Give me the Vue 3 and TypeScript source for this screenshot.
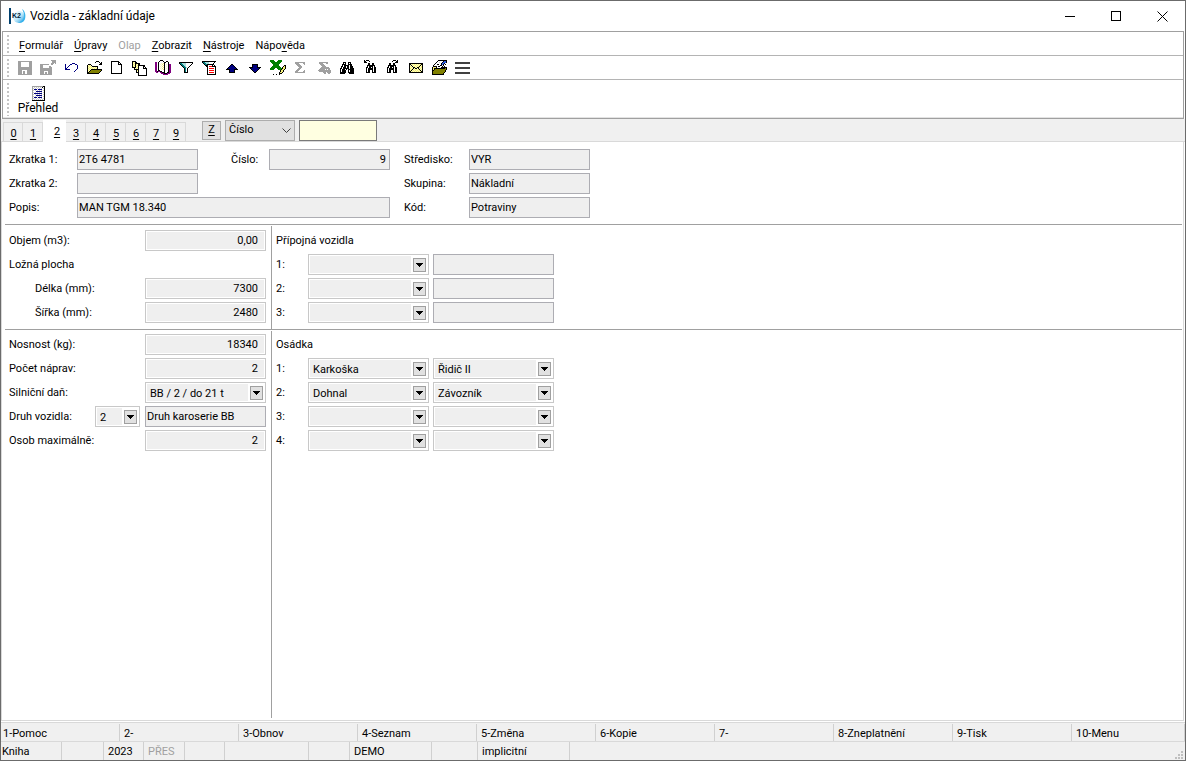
<script setup lang="ts">
import { ref } from 'vue'

interface Pixel { x: number; y: number; w: number; fill: string }
interface Tool { name: string; disabled?: boolean; rows: string[] }

const palette: Record<string, string> = {
  k: '#000000', g: '#a0a0a0', w: '#ffffff', n: '#000080', y: '#f4ee7a', Y: '#ffffc0', o: '#808000',
  t: '#008080', a: '#a8dcdc', p: '#800080', r: '#ff0000', G: '#008000', c: '#c8c8c8', d: '#404040', b: '#3060e0',
}

/* Turns rows of palette letters into horizontal runs of one colour. */
function runs(rows: string[]): Pixel[] {
  const out: Pixel[] = []
  rows.forEach((row, y) => {
    let x = 0
    while (x < row.length) {
      const ch = row[x]
      let end = x + 1
      while (end < row.length && row[end] === ch) end++
      if (palette[ch]) out.push({ x, y, w: end - x, fill: palette[ch] })
      x = end
    }
  })
  return out
}

const tools: Tool[] = [
  { name: 'Uložit', disabled: true, rows: [
    '', '', ' gggggggggggggg', ' gggwwwwwwwwggg', ' gggwwwwwwwwggg', ' gggwwwwwwwwggg', ' gggwwwwwwwwggg', ' gggwwwwwwwwggg',
    ' gggggggggggggg', ' gggggggggggggg', ' gggggggggggggg', ' ggggwwwwwggggg', ' ggggwggwwggggg', ' ggggwggwwggggg', ' ggggwggwwggggg', ' gggggggggggggg'] },
  { name: 'Uložit a zavřít', disabled: true, rows: [
    '', '           ggggg', '            gggg', '            gggg', '           ggg g', 'ggggggggg  gg', 'gggwwwwww', 'gggwwwwwwgg', 'gggwwwwwwggg',
    'gggggggggggg', 'gggggggggggg', 'gggggggggggg', 'ggggwwwwgggg', 'ggggwggwgggg', 'ggggwggwgggg', 'gggggggggggg'] },
  { name: 'Zpět', rows: [
    '', '', '', '', '         nnn', '  n    nn   nn', '  n   n       n', '  n  n        n', '  n n         n', '  nn          n', '  nnnnn      n', '            n', '           n'] },
  { name: 'Otevřít', rows: [
    '', '', '          kkk', '         k   k k', '              kk', '  kkk        kkk', ' kYyYk', ' kyYyYkkkkkk', ' kYyYyYyYyYk', ' kyYyYyYyYyk',
    ' kYyYkkkkkkkkkkk', ' kyYkooooooooook', ' kYkooooooooook', ' kkooooooooook', ' kkkkkkkkkkkk'] },
  { name: 'Nový', rows: [
    '', '', '  kkkkkkkk', '  kwwwwwwkk', '  kwwwwwwkwk', '  kwwwwwwkkkk', '  kwwwwwwwwwk', '  kwwwwwwwwwk', '  kwwwwwwwwwk', '  kwwwwwwwwwk',
    '  kwwwwwwwwwk', '  kwwwwwwwwwk', '  kwwwwwwwwwk', '  kwwwwwwwwwk', '  kkkkkkkkkkk'] },
  { name: 'Kopie', rows: [
    '', '', 'kkkk', 'kyYkk', 'kYykkkkk', 'kyYkyYkk', 'kYykYykkkkkkk', 'kyYkyYkwwwwkk', 'kkkkYykwwwwkwk', '  kYyYkwwwwkkkk', '  kkkkkwwwwwwwk', '    kykwwwwwwwk',
    '    kYkwwwwwwwk', '    kkkwwwwwwwk', '      kwwwwwwwk', '      kwwwwwwwk', '      kkkkkkkkk'] },
  { name: 'Kniha', rows: [
    '', '     kkk', '    kwwwk  kk', 'pp kwwwwwkkwwk', 'pp kwwYwykwwwk', 'pp kwYwywkwYwkpp', 'pp kwwYwykwwwkpp', 'pp kwYwywkwYwkpp', 'pp kwwYwykwwwkpp', 'pp kwYwywkwYwkpp',
    'pp kwwYwykwwwkpp', 'pp kkwwwwkwwwkpp', 'ppkppkkwwkwwwkpp', ' pp  ppkkkwwkkpp', '      pppkkkppp', '        ppppp'] },
  { name: 'Filtr', rows: [
    '', '', '', ' kkkkkkkkkkkkkk', ' kttaaaawwwwwwk', '  kttaaawwwwwk', '   kttaawwwwk', '    kttawwwk', '     kttawk', '      ktwk', '      ktwk', '      ktwk', '      ktwk', '      kkkk'] },
  { name: 'Filtr záznamů', rows: [
    '', '', ' kkkkkkkkkkkkkk', ' kttaaaawwwwwk', '  kttaaawwwwk', '   kttkkkkkkk', '    kkkwwwwkwk', '     kkwrrrkkkk', '      kwwwwwwwk', '      kwrrrrrwk', '      kwwwwwwwk', '      kwrrrrrwk',
    '      kwwwwwwwk', '      kwrrrrrwk', '      kwwwwwwwk', '      kkkkkkkkk'] },
  { name: 'Nahoru', rows: [
    '', '', '', '', '', '       kk', '      knnk', '     knnnnk', '    knnnnnnk', '   knnnnnnnnk', '  kkkknnnnkkkk', '     knnnnk', '     knnnnk', '     kkkkkk'] },
  { name: 'Dolů', rows: [
    '', '', '', '', '', '     kkkkkk', '     knnnnk', '     knnnnk', '  kkkknnnnkkkk', '   knnnnnnnnk', '    knnnnnnk', '     knnnnk', '      knnk', '       kk'] },
  { name: 'Export do Excelu', rows: [
    '', 'GGGG    GGGG', 'GGGGG  GGGGG', ' GGGGGGGGGG', '  GGGGGGGG', '   GGGGGG', '   GGGGGG     kk', '  GGGGGGGG   kyk', ' GGGGGGGGGG kyyk', 'GGGGG  GGGGGkyyk', 'GGGG    GGGkyyk', '          kyyk', '          kyyk', '         kyyk', '         kkk', '   k  k  k'] },
  { name: 'Součet', disabled: true, rows: [
    '', '', '', '  gggggggggg', '  gggg    gg', '   gggg    g', '    gggg', '     gggg', '      ggg', '     ggg', '    ggg', '   ggg     g', '  ggg     gg', '  gggggggggg'] },
  { name: 'Součet výběru', disabled: true, rows: [
    '', '', '', '   ggggggggg', '   gggg   gg', '    gggg', '     gggg', '      gggg', '     gggggggg', '    gggggggggg', '   ggggggwgwgg', '  ggggggggggggg', '   gggggggggggg', '       gggwgggg', '        gg  gg'] },
  { name: 'Hledat', rows: [
    '', '', '', '    kkk  kkk', '    kwk  kwk', '   kkkk  kkkk', '   kwkkkkkwkk', '  kkwkkwkkwkkk', '  kwkkkwkkwkkk', ' kkwkkkkkkwkkkk', ' kwkkkwkwkkkkkk', ' kwkkkk  kwkkkk', ' kwkkkk  kwkkkk', ' kkkkkk  kkkkkk', ' kkkkk    kkkkk'] },
  { name: 'Hledat předchozí', rows: [
    '', '  k kkk', '  kk   k', '  kkk', '      kk  kk', '      kk  kk', '     kkkkkkkk', '     kwkkkkwk', '    kkwkkwkwkk', '    kwkkkkkwkk', '    kwkkkkkwkk', '    kwkk  kwkk', '    kwkk  kwkk', '    kkkk  kkkk'] },
  { name: 'Hledat další', rows: [
    '', '        kkk k', '       k   kk', '          kkk', '    kk  kk', '    kk  kk', '   kkkkkkkk', '   kwkkkkwk', '  kkwkkwkwkk', '  kwkkkkkwkk', '  kwkkkkkwkk', '  kwkk  kwkk', '  kwkk  kwkk', '  kkkk  kkkk'] },
  { name: 'Pošta', rows: [
    '', '', '', '', ' kkkkkkkkkkkkkk', ' kkYyYyYyYyYykk', ' kYkYyYyYyYykYk', ' kyYkYyYyYykYyk', ' kYyYkkyYkkyYyk', ' kyYykYkkYkYyYk', ' kYykYyYyYykYyk', ' kykYyYyYyYykYk', ' kkYyYyYyYyYykk', ' kkkkkkkkkkkkkk'] },
  { name: 'Upravit', rows: [
    '', '       kkkkkkkkk', '      kwwwwwkbbk', '     kwwcwwkbbbk', '    kwwwwwkbbk', '   kwwkkwwkbk k', '  kwwwwwwkkwk', '  kkkkwkkwwk k', ' kyyykwwwwkkkkkk', ' kykkkkkkkkkkkok', ' kykoooooooooook', ' kkoooooooooook', ' kooooooooooook', ' koooooooooook', ' kooooooooook', ' kkkkkkkkkkkk'] },
  { name: 'Nabídka', rows: [
    '', '', '', ' ddddddddddddddd', ' ddddddddddddddd', '', '', '', ' ddddddddddddddd', ' ddddddddddddddd', '', '', '', ' ddddddddddddddd', ' ddddddddddddddd'] },
]

const overviewIcon = [
  'gggggggggggkk', 'gwcwcwcwcwkwk', 'gcwcwcwcwcwck', 'gwnnnwnnnnwwk', 'gcwcwcwcwcwck', 'gwwwnnnnnnwwk', 'gcwcwcwcwcwck', 'gwnnnnnnnnwwk',
  'gcwcwcwcwcwck', 'gwwwnnnnnnwwk', 'gcwcwcwcwcwck', 'gwnnnwnnnnwwk', 'gcwcwcwcwcwck', 'gwcwcwcwcwcwk', 'kkkkkkkkkkkkk']

const menus = [
  { pre: '', key: 'F', post: 'ormulář' }, { pre: '', key: 'Ú', post: 'pravy' }, { pre: 'Olap', key: '', post: '', disabled: true },
  { pre: '', key: 'Z', post: 'obrazit' }, { pre: '', key: 'N', post: 'ástroje' }, { pre: 'Nápo', key: 'v', post: 'ěda' },
]
const tabs = ['0', '1', '2', '3', '4', '5', '6', '7', '9']
const activeTab = ref('2')
const trailers = ['1', '2', '3']
const crew = [
  { person: 'Karkoška', role: 'Řidič II' }, { person: 'Dohnal', role: 'Závozník' }, { person: '', role: '' }, { person: '', role: '' },
]
const functionKeys = ['1-Pomoc', '2-', '3-Obnov', '4-Seznam', '5-Změna', '6-Kopie', '7-', '8-Zneplatnění', '9-Tisk', '10-Menu']
const status = ['Kniha', '', '2023', 'PŘES', '', '', '', 'DEMO', '', 'implicitní', '']
</script>

<template>
  <div class="window">
    <header class="titlebar">
      <svg class="logo" width="17" height="18" viewBox="0 0 17 18" aria-hidden="true">
        <defs>
          <linearGradient id="drop" x1="0" y1="0" x2="1" y2="1">
            <stop offset="0" stop-color="#ffffff" />
            <stop offset="0.5" stop-color="#bfe9fa" />
            <stop offset="1" stop-color="#1493dc" />
          </linearGradient>
        </defs>
        <circle cx="10" cy="10" r="6" fill="url(#drop)" />
        <path d="M13 2c3 2 4 6 3 10-1 3-4 4-7 4 4-2 6-4 6-8 0-2-1-4-2-6z" fill="#38b4ec" />
        <rect width="2" height="16" y="1" fill="#00406e" />
        <text x="3" y="11" class="logo-text">K2</text>
      </svg>
      <h1>Vozidla - základní údaje</h1>
      <div class="caption-buttons">
        <button type="button" aria-label="Minimalizovat"><svg width="11" height="11"><path d="M0 5.500h10" /></svg></button>
        <button type="button" aria-label="Maximalizovat"><svg width="11" height="11"><path d="M.5 .5h9v9h-9z" /></svg></button>
        <button type="button" aria-label="Zavřít"><svg width="11" height="11"><path class="smooth" d="M.5 .5l10 10M10.500 .5l-10 10" /></svg></button>
      </div>
    </header>

    <div class="bars">
      <nav class="bar menu" aria-label="Hlavní nabídka">
        <button v-for="(m, i) in menus" :key="i" type="button" :disabled="m.disabled">{{ m.pre }}<u v-if="m.key">{{ m.key }}</u>{{ m.post }}</button>
      </nav>
      <div class="bar toolbar" role="toolbar">
        <button v-for="t in tools" :key="t.name" type="button" :disabled="t.disabled" :aria-label="t.name">
          <svg width="17" height="17" viewBox="0 0 17 17"><rect v-for="(p, i) in runs(t.rows)" :key="i" :x="p.x" :y="p.y" :width="p.w" height="1" :fill="p.fill" /></svg>
        </button>
      </div>
      <div class="bar overview">
        <button type="button">
          <svg width="13" height="15" viewBox="0 0 13 15"><rect v-for="(p, i) in runs(overviewIcon)" :key="i" :x="p.x" :y="p.y" :width="p.w" height="1" :fill="p.fill" /></svg>
          <span>Přehled</span>
        </button>
      </div>
    </div>

    <div class="tabrow">
      <div class="tabs" role="tablist">
        <button v-for="t in tabs" :key="t" type="button" role="tab" :aria-selected="t === activeTab" :class="{ active: t === activeTab }" @click="activeTab = t"><u>{{ t }}</u></button>
      </div>
      <button type="button" class="zbutton"><u>Z</u></button>
      <div class="order">
        <select aria-label="Třídění"><option>Číslo</option></select>
        <svg width="9" height="6" aria-hidden="true"><path d="M.5 .5l4 4 4-4" /></svg>
      </div>
      <input class="search" type="text" aria-label="Hledat">
    </div>

    <main class="page">
      <section class="head">
        <label for="z1">Zkratka 1:</label><input id="z1" class="ro" readonly value="2T6 4781">
        <label for="num" class="second">Číslo:</label><input id="num" class="ro num" readonly value="9">
        <label for="str" class="third">Středisko:</label><input id="str" class="ro" readonly value="VYR">
        <label for="z2">Zkratka 2:</label><input id="z2" class="ro" readonly>
        <label for="skup" class="third">Skupina:</label><input id="skup" class="ro" readonly value="Nákladní">
        <label for="pop">Popis:</label><input id="pop" class="ro wide" readonly value="MAN TGM 18.340">
        <label for="kod" class="third">Kód:</label><input id="kod" class="ro" readonly value="Potraviny">
      </section>

      <div class="band">
        <section class="left">
          <div class="row"><label for="obj">Objem (m3):</label><input id="obj" class="ed" value="0,00"></div>
          <div class="row">Ložná plocha</div>
          <div class="row sub"><label for="del">Délka (mm):</label><input id="del" class="ed" value="7300"></div>
          <div class="row sub"><label for="sir">Šířka (mm):</label><input id="sir" class="ed" value="2480"></div>
        </section>
        <section class="right">
          <h2>Přípojná vozidla</h2>
          <div v-for="t in trailers" :key="t" class="row">
            <label :for="'trailer' + t">{{ t }}:</label>
            <div class="combo"><select :id="'trailer' + t"><option></option></select><svg width="13" height="14" aria-hidden="true"><path class="box" d="M.5 .5h12v13H.5z" /><path d="M3 5h7v1H9v1H8v1H7v1H6V8H5V7H4V6H3z" /></svg></div>
            <input class="ro" readonly :aria-label="'Název přípojného vozidla ' + t">
          </div>
        </section>
      </div>

      <div class="band last">
        <section class="left">
          <div class="row"><label for="nos">Nosnost (kg):</label><input id="nos" class="ed" value="18340"></div>
          <div class="row"><label for="nap">Počet náprav:</label><input id="nap" class="ed" value="2"></div>
          <div class="row"><label for="dan">Silniční daň:</label>
            <div class="combo"><select id="dan"><option>BB / 2 / do 21 t</option></select><svg width="13" height="14" aria-hidden="true"><path class="box" d="M.5 .5h12v13H.5z" /><path d="M3 5h7v1H9v1H8v1H7v1H6V8H5V7H4V6H3z" /></svg></div>
          </div>
          <div class="row"><label for="druh">Druh vozidla:</label>
            <div class="combo short"><select id="druh"><option>2</option></select><svg width="13" height="14" aria-hidden="true"><path class="box" d="M.5 .5h12v13H.5z" /><path d="M3 5h7v1H9v1H8v1H7v1H6V8H5V7H4V6H3z" /></svg></div>
            <input class="ro" readonly value="Druh karoserie BB" aria-label="Popis druhu vozidla">
          </div>
          <div class="row"><label for="osob">Osob maximálně:</label><input id="osob" class="ed" value="2"></div>
        </section>
        <section class="right">
          <h2>Osádka</h2>
          <div v-for="(c, i) in crew" :key="i" class="row">
            <label :for="'crew' + i">{{ i + 1 }}:</label>
            <div class="combo"><select :id="'crew' + i"><option>{{ c.person }}</option></select><svg width="13" height="14" aria-hidden="true"><path class="box" d="M.5 .5h12v13H.5z" /><path d="M3 5h7v1H9v1H8v1H7v1H6V8H5V7H4V6H3z" /></svg></div>
            <div class="combo"><select :aria-label="'Funkce ' + (i + 1)"><option>{{ c.role }}</option></select><svg width="13" height="14" aria-hidden="true"><path class="box" d="M.5 .5h12v13H.5z" /><path d="M3 5h7v1H9v1H8v1H7v1H6V8H5V7H4V6H3z" /></svg></div>
          </div>
        </section>
      </div>
    </main>

    <footer>
      <div class="keys"><button v-for="k in functionKeys" :key="k" type="button">{{ k }}</button></div>
      <div class="status">
        <span v-for="(s, i) in status" :key="i" :class="{ off: s === 'PŘES' }">{{ s }}</span>
        <svg class="grip" width="10" height="10" aria-hidden="true"><path d="M7 1h2v2H7zM4 4h2v2H4zM7 4h2v2H7zM1 7h2v2H1zM4 7h2v2H4zM7 7h2v2H7z" /></svg>
      </div>
    </footer>
  </div>
</template>

<style>
body { margin: 0; background: #ffffff; }
</style>

<style scoped>
* { box-sizing: border-box; }
.window { min-height: 100vh; display: flex; flex-direction: column; border: 1px solid #6b6b6b; background: #fff; color: #000; font: 11px/14px Roboto, "Liberation Sans", sans-serif; }
button, input, select { font: inherit; color: inherit; margin: 0; border-radius: 0; outline: none; min-width: 0; }
button { padding: 0; border: 0; background: none; }
u { text-underline-offset: 2px; }
svg { display: block; flex: none; shape-rendering: crispEdges; }

.titlebar { display: flex; align-items: center; height: 30px; padding-left: 8px; }
.logo, .smooth { shape-rendering: auto; }
.logo-text { font: 900 7px "Liberation Sans", sans-serif; fill: #001c38; }
h1 { flex: 1; margin: 0 0 0 4px; font-size: 12px; font-weight: 400; line-height: 16px; }
.caption-buttons { display: flex; }
.caption-buttons button { width: 46px; height: 28px; display: grid; place-items: center; }
.caption-buttons path { fill: none; stroke: #000; }

.bars { margin: 0 1px; border: 1px solid #a0a0a0; }
.bar { display: flex; align-items: stretch; border-bottom: 1px solid #b4b4b4; padding: 0 2px 0 11px; background: repeating-linear-gradient(#c4c4c4 0 2px, #fff 2px 4px) 4px 3px / 2px calc(100% - 4px) no-repeat; }
.menu { height: 24px; gap: 1px; }
.menu button { padding: 4px 5px 0; }
.menu button:disabled { color: #a0a0a0; }
.toolbar { height: 24px; }
.toolbar button { width: 23px; display: flex; justify-content: center; padding-top: 3px; }
.overview { height: 38px; border-bottom-color: #e3e3e3; }
.overview button { width: 48px; display: flex; flex-direction: column; align-items: center; padding-top: 6px; font-size: 12px; line-height: 14px; }

.tabrow { display: flex; align-items: center; height: 23px; padding-left: 2px; background: #f0f0f0; border-bottom: 1px solid #d9d9d9; }
.tabs { display: flex; align-self: stretch; align-items: flex-end; margin-right: 16px; }
.tabs button { width: 20px; height: 19px; border: 1px solid #d9d9d9; border-width: 1px 1px 0 0; padding: 3px 0 0 1px; }
.tabs button:first-child { border-left-width: 1px; }
.tabs .active { width: 23px; height: 22px; margin-bottom: -1px; background: #fff; border-color: #fff; padding: 0 0 0 6px; }
.zbutton { width: 19px; height: 19px; background: #e1e1e1; border: 1px solid #adadad; }
.order { position: relative; width: 70px; height: 21px; margin: 0 4px; }
.order select { appearance: none; width: 100%; height: 100%; padding: 0 20px 0 3px; border: 1px solid #adadad; background: #e1e1e1; }
.order svg { position: absolute; right: 4px; top: 8px; pointer-events: none; shape-rendering: auto; }
.order path { fill: none; stroke: #404040; }
.search { width: 78px; height: 21px; padding: 0 3px; border: 1px solid #7a7a7a; background: #ffffe1; }

.page { flex: 1; display: flex; flex-direction: column; margin: 0 1px 0 0; padding: 6px 1px 0 3px; border: 1px solid #d9d9d9; border-top: 0; }
.head { display: grid; grid-template-columns: 68px 121px 71px 121px 79px 121px; grid-auto-rows: 21px; row-gap: 3px; align-items: stretch; padding: 1px 0 6px 4px; border-bottom: 1px solid #a0a0a0; }
label, h2 { line-height: 21px; white-space: nowrap; }
.second { padding-left: 33px; }
.third { grid-column: 5; padding-left: 14px; }
.wide { grid-column: 2 / 5; }
.ro { width: 121px; height: 21px; padding: 0 3px 1px 1px; border: 1px solid #adadb3; background: #efefef; }
.ro.wide { width: auto; }
.num { text-align: right; }
.ed { width: 121px; height: 21px; padding: 0 7px 1px; text-align: right; border: 1px solid #c8c8c8; background: #efefef; box-shadow: inset 0 0 0 1px #fff; }

.band { display: grid; grid-template-columns: 267px 1fr; padding-top: 1px; border-bottom: 1px solid #a0a0a0; }
.band.last { flex: 1; border-bottom: 0; margin-bottom: 2px; }
.left { display: flex; flex-direction: column; gap: 3px; padding: 4px 5px 6px 4px; border-right: 1px solid #a0a0a0; }
.last .left { padding-top: 3px; }
.right { display: flex; flex-direction: column; gap: 3px; padding: 4px; }
.last .right { padding-top: 3px; }
.row { display: flex; height: 21px; line-height: 21px; gap: 4px; }
.left label { flex: 1; }
.left .short { margin-right: 1px; }
.sub { padding-left: 26px; }
.right label { width: 28px; }
h2 { margin: 0; height: 21px; font-size: 11px; font-weight: 400; }
.combo { position: relative; width: 121px; height: 21px; }
.combo.short { width: 45px; }
.combo select { appearance: none; display: block; width: 100%; height: 100%; padding: 0 18px 1px 4px; border: 1px solid #c8c8c8; background: linear-gradient(#efefef, #efefef) 1px 1px / calc(100% - 18px) calc(100% - 2px) no-repeat #fff; }
.combo svg { position: absolute; right: 3px; top: 4px; pointer-events: none; }
.box { fill: #e1e1e1; stroke: #a0a0a0; }

footer { margin-top: 1px; background: #f0f0f0; border-top: 1px solid #d9d9d9; }
.keys { display: grid; grid-template-columns: repeat(9, 119fr) 113fr; height: 19px; padding: 1px 0; border-bottom: 1px solid #d9d9d9; }
.keys button { text-align: left; padding: 3px 0 0 4px; border-right: 1px solid #d0d0d0; }
.keys button:first-child { padding-left: 2px; }
.status { position: relative; display: grid; grid-template-columns: 61px 42px 40px 41px 40px 84px 41px 82px 46px 92px 1fr; height: 18px; }
.status span { padding: 3px 0 0 4px; border-right: 1px solid #d0d0d0; white-space: nowrap; }
.status span:first-child { padding-left: 1px; }
.status span:last-of-type { border: 0; }
.status .off { color: #a0a0a0; }
.grip { position: absolute; right: 1px; bottom: 0; fill: #bfbfbf; }
</style>
